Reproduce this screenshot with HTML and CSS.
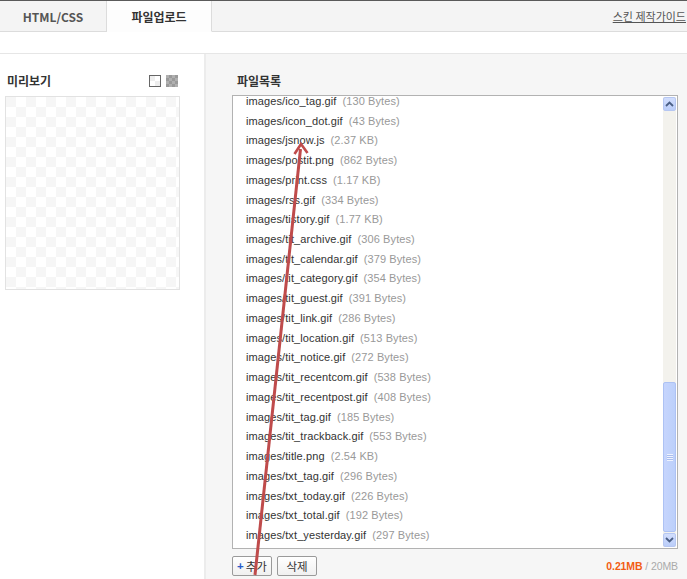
FILE: index.html
```html
<!DOCTYPE html>
<html>
<head>
<meta charset="utf-8">
<link rel="stylesheet" href="styles.css">
</head>
<body>
<div class="page">
  <div class="tabbar">
    <div class="tab">HTML/CSS</div>
    <div class="tab active">파일업로드</div>
    <div class="tab-spacer"><a class="guide" href="#">스킨 제작가이드</a></div>
  </div>
  <div class="gap"></div>
  <div class="main">
    <div class="left">
      <div class="left-head">
        <span class="title">미리보기</span>
        <span class="bg-icons"><span class="bg-icon light"></span><span class="bg-icon dark"></span></span>
      </div>
      <div class="preview"></div>
    </div>
    <div class="right">
      <div class="right-head"><span class="title">파일목록</span></div>
      <div class="listbox">
        <div class="list">
          <div class="list-inner">
            <div class="row"><span class="fn">images/ico_tag.gif</span><span class="sz">(130 Bytes)</span></div>
            <div class="row"><span class="fn">images/icon_dot.gif</span><span class="sz">(43 Bytes)</span></div>
            <div class="row"><span class="fn">images/jsnow.js</span><span class="sz">(2.37 KB)</span></div>
            <div class="row"><span class="fn">images/postit.png</span><span class="sz">(862 Bytes)</span></div>
            <div class="row"><span class="fn">images/print.css</span><span class="sz">(1.17 KB)</span></div>
            <div class="row"><span class="fn">images/rss.gif</span><span class="sz">(334 Bytes)</span></div>
            <div class="row"><span class="fn">images/tistory.gif</span><span class="sz">(1.77 KB)</span></div>
            <div class="row"><span class="fn">images/tit_archive.gif</span><span class="sz">(306 Bytes)</span></div>
            <div class="row"><span class="fn">images/tit_calendar.gif</span><span class="sz">(379 Bytes)</span></div>
            <div class="row"><span class="fn">images/tit_category.gif</span><span class="sz">(354 Bytes)</span></div>
            <div class="row"><span class="fn">images/tit_guest.gif</span><span class="sz">(391 Bytes)</span></div>
            <div class="row"><span class="fn">images/tit_link.gif</span><span class="sz">(286 Bytes)</span></div>
            <div class="row"><span class="fn">images/tit_location.gif</span><span class="sz">(513 Bytes)</span></div>
            <div class="row"><span class="fn">images/tit_notice.gif</span><span class="sz">(272 Bytes)</span></div>
            <div class="row"><span class="fn">images/tit_recentcom.gif</span><span class="sz">(538 Bytes)</span></div>
            <div class="row"><span class="fn">images/tit_recentpost.gif</span><span class="sz">(408 Bytes)</span></div>
            <div class="row"><span class="fn">images/tit_tag.gif</span><span class="sz">(185 Bytes)</span></div>
            <div class="row"><span class="fn">images/tit_trackback.gif</span><span class="sz">(553 Bytes)</span></div>
            <div class="row"><span class="fn">images/title.png</span><span class="sz">(2.54 KB)</span></div>
            <div class="row"><span class="fn">images/txt_tag.gif</span><span class="sz">(296 Bytes)</span></div>
            <div class="row"><span class="fn">images/txt_today.gif</span><span class="sz">(226 Bytes)</span></div>
            <div class="row"><span class="fn">images/txt_total.gif</span><span class="sz">(192 Bytes)</span></div>
            <div class="row"><span class="fn">images/txt_yesterday.gif</span><span class="sz">(297 Bytes)</span></div>
          </div>
        </div>
        <div class="scrollbar">
          <div class="sb-btn"><svg width="9" height="6" viewBox="0 0 9 6"><path d="M1 5 L4.5 1.5 L8 5" fill="none" stroke="#4a5f86" stroke-width="1.8"/></svg></div>
          <div class="sb-track">
            <div class="sb-thumb"><span class="grip"></span></div>
          </div>
          <div class="sb-btn"><svg width="9" height="6" viewBox="0 0 9 6"><path d="M1 1 L4.5 4.5 L8 1" fill="none" stroke="#4a5f86" stroke-width="1.8"/></svg></div>
        </div>
      </div>
      <div class="footer">
        <div class="buttons">
          <button class="btn"><span class="plus">+</span>추가</button>
          <button class="btn">삭제</button>
        </div>
        <div class="usage"><span class="used">0.21MB</span> <span class="total">/ 20MB</span></div>
      </div>
    </div>
  </div>
  <svg class="arrow" width="687" height="579" viewBox="0 0 687 579">
    <line x1="255" y1="575" x2="300.5" y2="149" stroke="#bf4b4b" stroke-width="3"/>
    <path d="M294.5 154 L301 144 L307.5 153" fill="none" stroke="#bf4b4b" stroke-width="2.6" stroke-linejoin="miter"/>
  </svg>
</div>
</body>
</html>
```

FILE: styles.css
```css
* { box-sizing: border-box; }
html, body { margin: 0; padding: 0; background: #fff; }
body { font-family: "Liberation Sans", "Noto Sans CJK KR", sans-serif; color: #333; }
.page { position: relative; width: 687px; height: 579px; overflow: hidden; border-top: 1px solid #5a5a5a; }

.tabbar { display: flex; height: 31px; background: #f4f4f4; }
.tab { width: 107px; display: flex; align-items: center; justify-content: center; font-size: 12px; font-weight: bold; color: #555; border-right: 1px solid #dcdcdc; border-bottom: 1px solid #dcdcdc; font-family: "Noto Sans CJK KR", "Liberation Sans", sans-serif; }
.tab.active { width: 105px; background: #fdfdfd; color: #333; border-bottom-color: #fdfdfd; }
.tab-spacer { flex: 1; border-bottom: 1px solid #dcdcdc; display: flex; align-items: center; justify-content: flex-end; }
.guide { font-family: "Noto Sans CJK KR", sans-serif; font-size: 11px; color: #555; text-decoration: underline; margin-right: 1px; white-space: nowrap; }

.gap { height: 22px; border-bottom: 1px solid #e6e6e6; }

.main { display: flex; height: 525px; }
.left { width: 206px; background: #fff; border-right: 2px solid #ececec; padding: 0 0 0 5px; }
.left-head { display: flex; align-items: flex-start; justify-content: space-between; height: 42px; padding: 18px 26px 0 2px; }
.title { font-family: "Noto Sans CJK KR", sans-serif; font-size: 12px; line-height: 17px; font-weight: bold; color: #333; }
.bg-icons { display: flex; gap: 5px; margin-top: 3px; }
.bg-icon { width: 12px; height: 12px; display: block; }
.bg-icon.light { border: 1px solid #666; background: conic-gradient(#fff 25%, #eee 0 50%, #fff 0 75%, #eee 0) 0 0 / 10px 10px; }
.bg-icon.dark { background: conic-gradient(#9a9a9a 25%, #b0b0b0 0 50%, #9a9a9a 0 75%, #b0b0b0 0) 0 0 / 6px 6px; }
.preview { width: 175px; height: 194px; border: 1px solid #e2e2e2; background: conic-gradient(#fff 25%, #f6f6f6 0 50%, #fff 0 75%, #f6f6f6 0) 0 0 / 20px 20px; }

.right { flex: 1; background: #f6f6f6; padding: 0 9px 0 26px; display: flex; flex-direction: column; }
.right-head { height: 41px; display: flex; align-items: flex-start; padding: 18px 0 0 5px; }
.listbox { height: 454px; border: 1px solid #b2b2b2; background: #fff; display: flex; padding: 1px 1px 1px 0; flex-shrink: 0; }
.list { flex: 1; overflow: hidden; }
.list-inner { margin-top: -6px; padding-left: 13px; }
.row { height: 19.74px; display: flex; align-items: center; font-size: 11px; letter-spacing: 0.1px; white-space: nowrap; }
.fn { color: #333; }
.sz { color: #999; margin-left: 6px; }

.scrollbar { width: 13px; display: flex; flex-direction: column; background: #f3f2ed; }
.sb-btn { height: 14px; background: linear-gradient(#d2defd, #bacdf9); border: 1px solid #b6c7f2; border-radius: 2px; display: flex; align-items: center; justify-content: center; }
.sb-track { flex: 1; display: flex; flex-direction: column; justify-content: flex-end; }
.sb-thumb { height: 150px; background: linear-gradient(90deg, #c6d5fd, #bcd0fb); border: 1px solid #adc2f4; border-radius: 2px; display: flex; align-items: center; justify-content: center; margin-bottom: 1px; }
.grip { width: 6px; height: 7px; background: repeating-linear-gradient(#eef3ff 0 1px, #a9bdee 1px 2px); }

.footer { display: flex; justify-content: space-between; align-items: flex-start; padding-top: 7px; }
.buttons { display: flex; gap: 5px; }
.btn { width: 40px; height: 20px; padding: 0; border: 1px solid #9a9a9a; border-radius: 2px; background: linear-gradient(#fff, #f0f0f0); font-family: "Noto Sans CJK KR", sans-serif; font-size: 11.5px; color: #333; display: flex; align-items: center; justify-content: center; }
.plus { color: #2a5bc9; font-weight: bold; margin-right: 2px; font-family: "Liberation Sans", sans-serif; }
.usage { font-family: "Liberation Sans", sans-serif; font-size: 10.5px; letter-spacing: -0.1px; margin-top: 4px; }
.used { color: #f25c12; font-weight: bold; }
.total { color: #aaa; }

.arrow { position: absolute; left: 0; top: -1px; pointer-events: none; }
```
